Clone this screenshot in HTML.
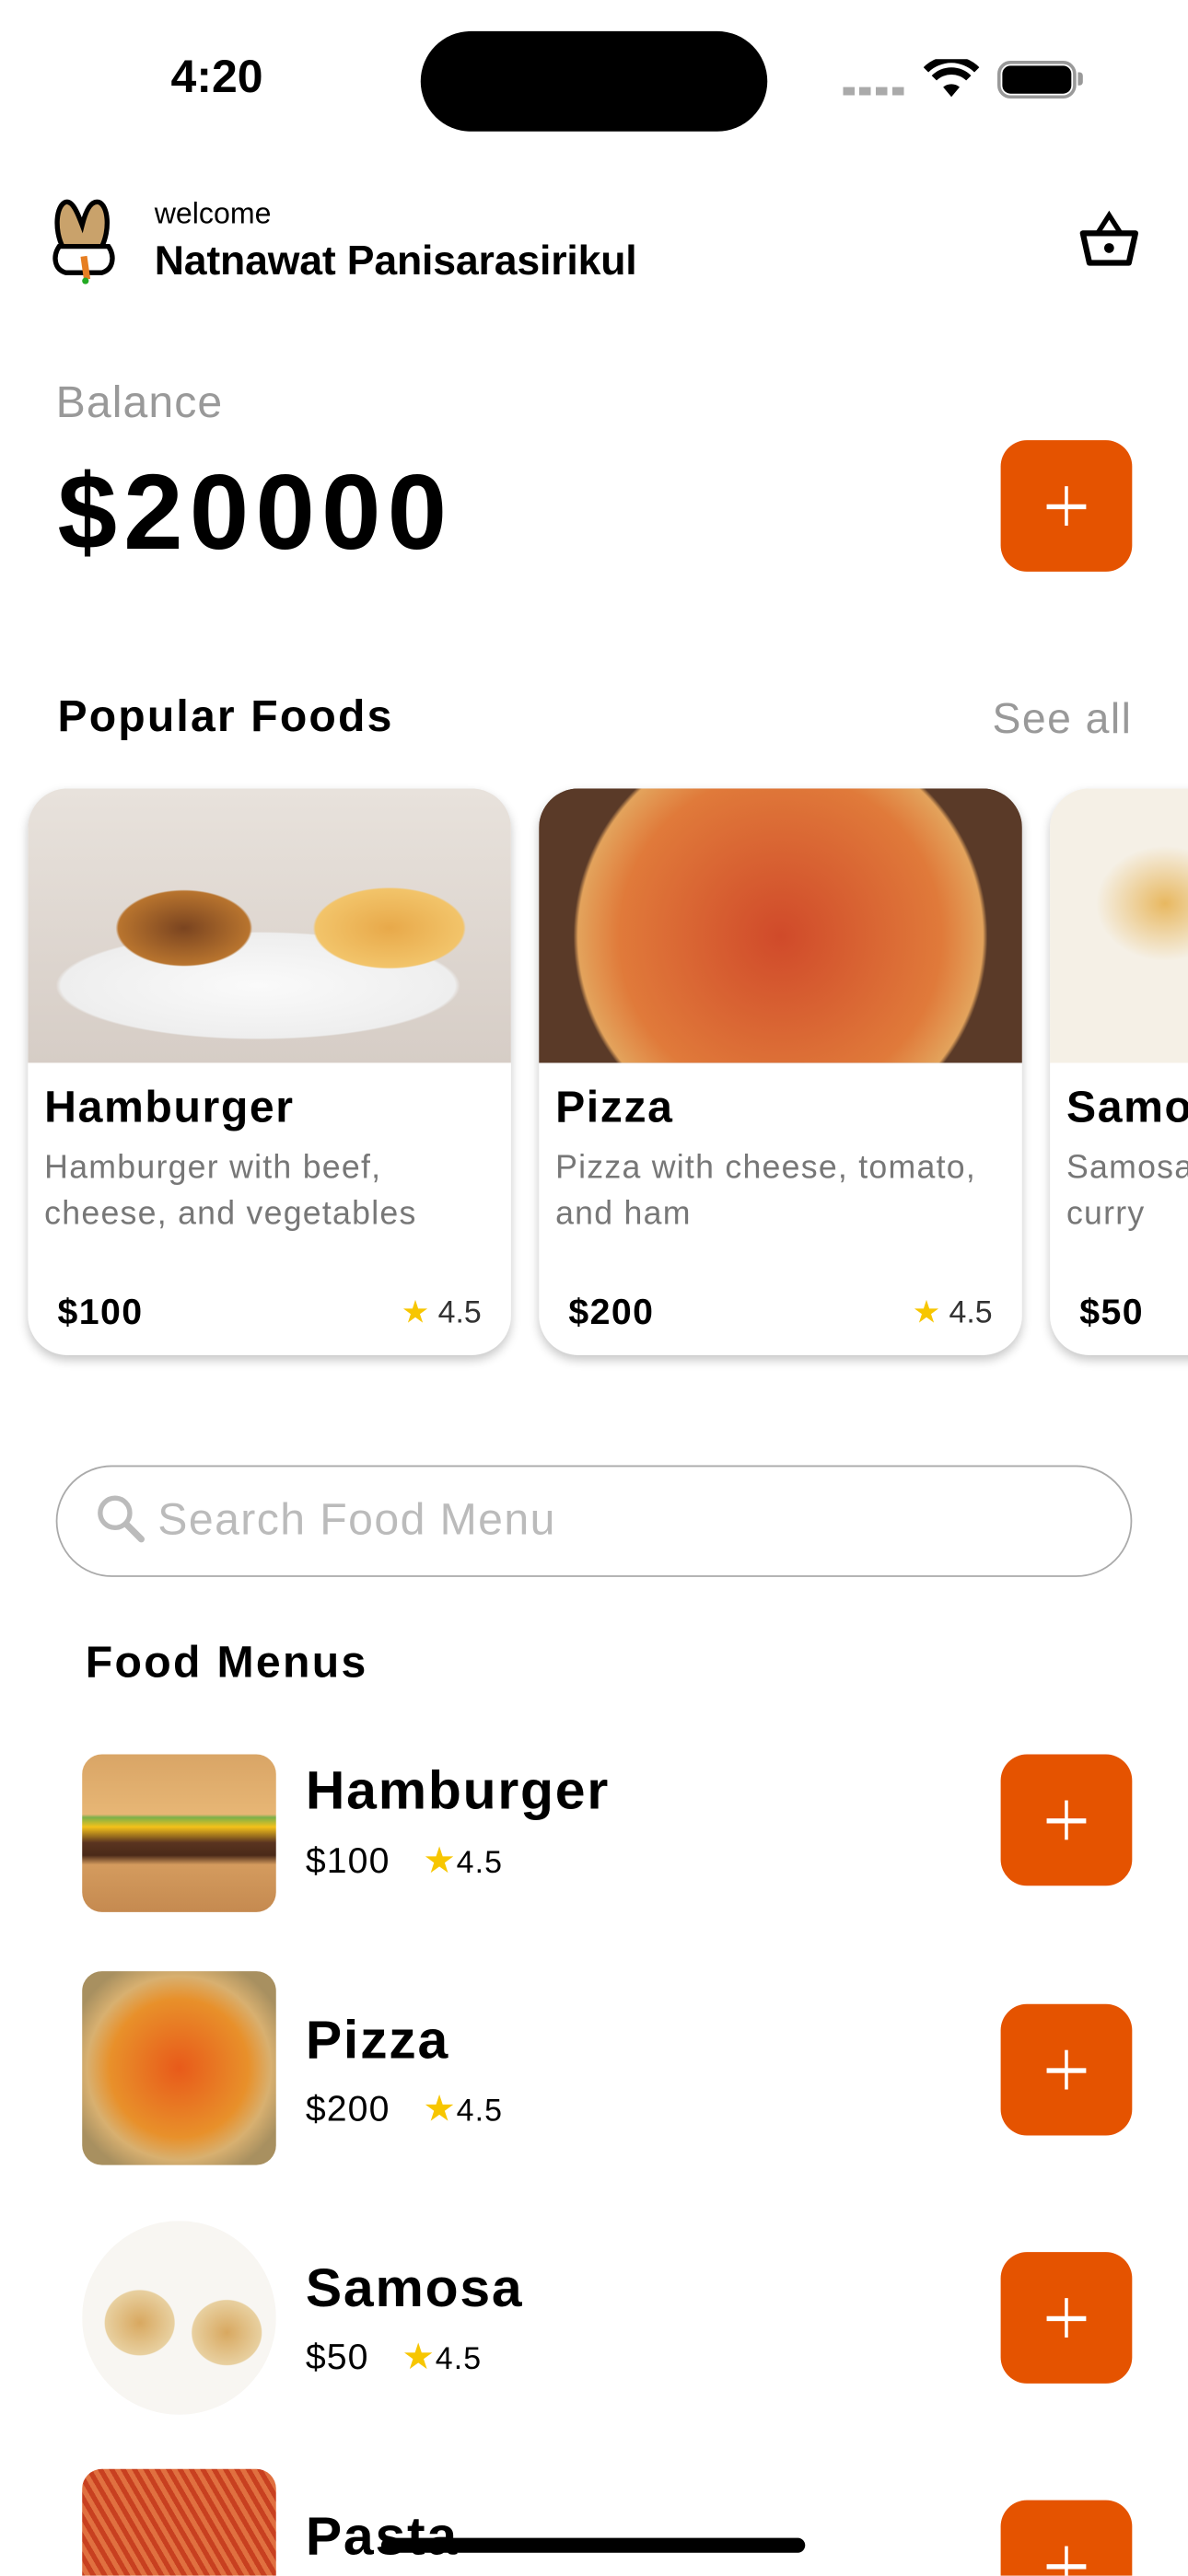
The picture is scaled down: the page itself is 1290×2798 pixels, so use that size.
<!DOCTYPE html>
<html><head><meta charset="utf-8"><style>
*{margin:0;padding:0;box-sizing:border-box}
html,body{width:1290px;height:2796px;overflow:hidden;background:#fff}
#w{position:absolute;left:0;top:0;width:723px;height:1568px;overflow:hidden;transform:scale(1.78423);transform-origin:0 0;font-family:"Liberation Sans",sans-serif;color:#000}
.a{position:absolute}
.btn{position:absolute;width:80px;height:80px;border-radius:16px;background:#e55300}
.btn:before,.btn:after{content:"";position:absolute;background:#fff;left:28px;top:39px;width:24px;height:2.5px}
.btn:after{left:38.7px;top:28px;width:2.5px;height:24px}
.card{position:absolute;top:480px;width:294px;height:345px;border-radius:24px;background:#fff;box-shadow:0 3px 6px rgba(0,0,0,.22);overflow:hidden}
.card .img{height:167px}
.card .t{position:absolute;left:10px;top:179px;font-size:27px;font-weight:bold;letter-spacing:.9px}
.card .d{position:absolute;left:10px;top:217px;font-size:20px;line-height:28px;color:#777;letter-spacing:.7px;width:300px;white-space:nowrap}
.card .p{position:absolute;left:18px;top:306px;font-size:22px;font-weight:bold;letter-spacing:.8px}
.card .r{position:absolute;right:18px;top:308px;font-size:19px;color:#333}
.star{color:#f7c600}
.row .tt{position:absolute;left:186px;font-size:33px;font-weight:bold;letter-spacing:1px}
.row .pp{position:absolute;left:186px;font-size:22px;letter-spacing:.6px}
.thumb{position:absolute;left:50px;width:118px;border-radius:12px}
</style></head><body><div id="w">
<div class="a" style="left:104px;top:31px;font-size:28px;font-weight:bold">4:20</div>
<div class="a" style="left:256px;top:19px;width:211px;height:61px;border-radius:31px;background:#000"></div>
<div class="a" style="left:513px;top:53px;width:38px;height:5px;background:repeating-linear-gradient(90deg,#aaa 0 7px,transparent 7px 10px)"></div>
<svg class="a" style="left:562px;top:36px" width="34" height="24" viewBox="0 0 34 24"><path d="M17 23l-5-6a8 8 0 0 1 10 0z M8 13a13 13 0 0 1 18 0l3-3a17 17 0 0 0-24 0z M3 8a20 20 0 0 1 28 0l3-3a24 24 0 0 0-34 0z" fill="#000"/></svg>
<div class="a" style="left:607px;top:37px;width:48px;height:23px;border:2px solid #999;border-radius:8px"></div>
<div class="a" style="left:610px;top:40px;width:42px;height:17px;background:#000;border-radius:5px"></div>
<div class="a" style="left:656px;top:44px;width:3px;height:8px;background:#999;border-radius:0 2px 2px 0"></div>

<svg class="a" style="left:30px;top:120px" width="44" height="54" viewBox="0 0 44 54"><path d="M8 30C3 20 4 5 10 3c4-1 7 6 10 14 2-8 5-15 10-14 6 2 7 17 2 27" fill="#c9a26b" stroke="#000" stroke-width="3"/><path d="M6 30c-4 6-3 14 4 16h22c7-2 8-10 4-16z" fill="#fff" stroke="#000" stroke-width="3"/><path d="M21 36l2 14" stroke="#e67e22" stroke-width="4"/><circle cx="22" cy="51" r="2" fill="#2a2"/></svg>
<div class="a" style="left:94px;top:120px;font-size:18px">welcome</div>
<div class="a" style="left:94px;top:145px;font-size:25px;font-weight:bold;letter-spacing:-.1px">Natnawat Panisarasirikul</div>
<svg class="a" style="left:656px;top:128px" width="38" height="36" viewBox="0 0 38 36"><path d="M12 14L19 3l7 11" fill="none" stroke="#000" stroke-width="3"/><path d="M3 14h32l-4 18H7z" fill="none" stroke="#000" stroke-width="3.5" stroke-linejoin="round"/><circle cx="19" cy="23" r="3" fill="#000"/></svg>

<div class="a" style="left:34px;top:230px;font-size:27px;color:#999;letter-spacing:.6px">Balance</div>
<div class="a" style="left:35px;top:274px;font-size:65px;font-weight:bold;letter-spacing:4px">$20000</div>
<div class="btn" style="left:609px;top:268px"></div>

<div class="a" style="left:35px;top:421px;font-size:27px;font-weight:bold;letter-spacing:1.2px">Popular Foods</div>
<div class="a" style="right:34px;top:422px;font-size:26px;color:#999;letter-spacing:.8px">See all</div>

<div class="card" style="left:17px"><div class="img" style="background:radial-gradient(ellipse 80px 45px at 95px 85px,#7a4420 0,#b8742e 50%,transparent 52%),radial-gradient(ellipse 75px 40px at 220px 85px,#e8a94a 0,#f2c46a 60%,transparent 62%),radial-gradient(ellipse 150px 40px at 140px 120px,#fafafa 0,#eee 80%,transparent 82%),linear-gradient(#e8e2dc,#d6cdc6)"></div>
<div class="t">Hamburger</div><div class="d">Hamburger with beef,<br>cheese, and vegetables</div><div class="p">$100</div><div class="r"><span class="star">★</span> 4.5</div></div>
<div class="card" style="left:328px"><div class="img" style="background:radial-gradient(circle 140px at 147px 90px,#d04a2a 0,#e07a3a 70%,#e3a35c 88%,#5a3a28 90%),#4a3024"></div>
<div class="t">Pizza</div><div class="d">Pizza with cheese, tomato,<br>and ham</div><div class="p">$200</div><div class="r"><span class="star">★</span> 4.5</div></div>
<div class="card" style="left:639px"><div class="img" style="background:radial-gradient(ellipse 60px 50px at 70px 70px,#e8b860,#f5f0e6 70%),#f5f2ea"></div>
<div class="t">Samosa</div><div class="d">Samosa with<br>curry</div><div class="p">$50</div></div>

<div class="a" style="left:34px;top:892px;width:655px;height:68px;border:1px solid #aaa;border-radius:34px"></div>
<svg class="a" style="left:58px;top:909px" width="32" height="32" viewBox="0 0 32 32"><circle cx="12" cy="12" r="9" fill="none" stroke="#bbb" stroke-width="3"/><path d="M19 19l9 9" stroke="#bbb" stroke-width="4" stroke-linecap="round"/></svg>
<div class="a" style="left:96px;top:910px;font-size:27px;color:#bbb;letter-spacing:.8px">Search Food Menu</div>

<div class="a" style="left:52px;top:997px;font-size:27px;font-weight:bold;letter-spacing:1.3px">Food Menus</div>

<div class="row">
<div class="thumb" style="top:1068px;height:96px;background:linear-gradient(#d9a566 0,#e7b675 38%,#7bb04a 40%,#f4c21a 46%,#5a3420 56%,#4a2a18 64%,#d49b5e 70%,#c58a50 100%)"></div>
<div class="tt" style="top:1071px">Hamburger</div>
<div class="pp" style="top:1120px">$100 &nbsp;&nbsp;<span class="star">★</span><span style="font-size:19px">4.5</span></div>
<div class="btn" style="left:609px;top:1068px"></div>

<div class="thumb" style="top:1200px;height:118px;background:radial-gradient(circle 70px at 59px 59px,#e85a1a,#e8902a 60%,#d8b070 80%,#a89060)"></div>
<div class="tt" style="top:1223px">Pizza</div>
<div class="pp" style="top:1271px">$200 &nbsp;&nbsp;<span class="star">★</span><span style="font-size:19px">4.5</span></div>
<div class="btn" style="left:609px;top:1220px"></div>

<div class="thumb" style="top:1352px;height:118px;background:radial-gradient(ellipse 30px 28px at 35px 62px,#d8a860,#e8d0a0 70%,transparent 72%),radial-gradient(ellipse 30px 28px at 88px 68px,#d8a860,#e8d0a0 70%,transparent 72%),#f8f6f2;border-radius:50%"></div>
<div class="tt" style="top:1374px">Samosa</div>
<div class="pp" style="top:1422px">$50 &nbsp;&nbsp;<span class="star">★</span><span style="font-size:19px">4.5</span></div>
<div class="btn" style="left:609px;top:1371px"></div>

<div class="thumb" style="top:1503px;height:80px;background:repeating-linear-gradient(60deg,#c84020 0 3px,#e07040 3px 6px)"></div>
<div class="tt" style="top:1525px">Pasta</div>
<div class="btn" style="left:609px;top:1522px"></div>
</div>
<div class="a" style="left:232px;top:1545px;width:258px;height:9px;border-radius:5px;background:#000"></div>
</div></body></html>
